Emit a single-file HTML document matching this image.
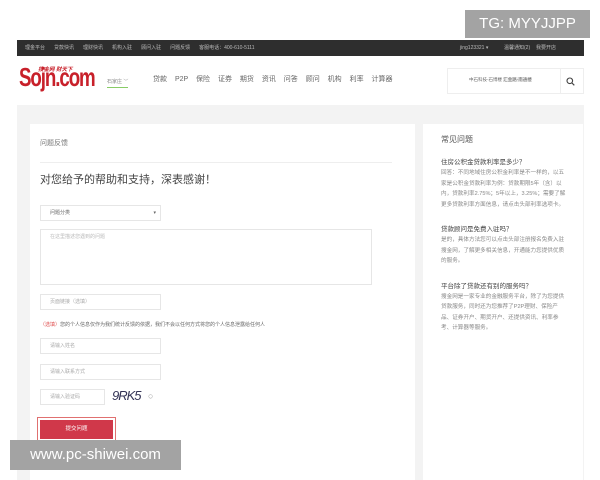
<!DOCTYPE html>
<html><head><meta charset="utf-8"><style>
*{margin:0;padding:0;box-sizing:border-box}
body{width:600px;height:480px;background:#fff;position:relative;overflow:hidden;font-family:"Liberation Sans","Noto Sans CJK SC",sans-serif;color:#555}
.a{position:absolute}
.top{left:17px;top:40px;width:567px;height:16px;background:#2e2e2e;font-size:5px;color:#bbb;line-height:16px}
.top span{margin-left:9px}
.hdr{left:17px;top:56px;width:567px;height:49px;background:#fff}
.gray{left:17px;top:105px;width:567px;height:375px;background:#f3f3f3}
.card{background:#fff}
.inp{position:absolute;border:1px solid #e6e6e6;background:#fff;font-size:5px;color:#aaa;padding-left:9px;line-height:14px}
.side p{font-size:5.6px;line-height:10.5px;color:#888}
.side h4{font-size:6.5px;font-weight:normal;color:#444;margin:12px 0 2px}
</style></head><body>
<div class="a top"><span style="margin-left:8px">理金平台</span><span>贷款快讯</span><span>理财快讯</span><span>机构入驻</span><span>顾问入驻</span><span>问题反馈</span><span>客服电话：400-610-5111</span>
<span style="position:absolute;left:434px">jing123321 ▾</span><span style="position:absolute;left:478px">温馨通知(2)</span><span style="position:absolute;left:510px">我要开店</span></div>
<div class="a hdr">
<div class="a" style="left:2px;top:8px;font-size:26px;line-height:1;font-weight:bold;color:#c8202a;letter-spacing:-1.5px;transform:scaleX(0.72);transform-origin:0 0;white-space:nowrap">Sojn.com</div>
<div class="a" style="left:21px;top:9px;font-size:5.5px;color:#c8202a;font-style:italic;font-weight:bold">搜金网 财天下</div>
<div class="a" style="left:90px;top:22px;font-size:5px;color:#888;border-bottom:1px solid #8c6;padding-bottom:2px">石家庄 ﹀</div>
<div class="a" style="left:136px;top:18px;font-size:7px;color:#666;word-spacing:6px">贷款 P2P 保险 证券 期货 资讯 问答 顾问 机构 利率 计算器</div>
<div class="a" style="left:430px;top:12px;width:137px;height:26px;border:1px solid #eee"></div>
<div class="a" style="left:452px;top:21px;font-size:4.5px;color:#666">中石科技-石博楼 <span style="background:#eee">汇金路-南通楼</span></div>
<div class="a" style="left:543px;top:12px;width:1px;height:26px;background:#eee"></div>
<svg class="a" style="left:549px;top:21px" width="9" height="9" viewBox="0 0 9 9"><circle cx="3.8" cy="3.8" r="2.8" fill="none" stroke="#444" stroke-width="1.1"/><path d="M6 6L8.3 8.3" stroke="#444" stroke-width="1.2"/></svg>
</div>
<div class="a gray"></div>
<div class="a card" style="left:30px;top:124px;width:385px;height:356px">
<div class="a" style="left:10px;top:14px;font-size:7px;color:#777">问题反馈</div>
<div class="a" style="left:10px;top:38px;width:352px;height:1px;background:#eee"></div>
<div class="a" style="left:10px;top:47px;font-size:11px;color:#444">对您给予的帮助和支持，深表感谢！</div>
<div class="inp" style="left:10px;top:81px;width:121px;height:16px;line-height:14px;color:#666">问题分类<span style="position:absolute;right:4px">▾</span></div>
<div class="inp" style="left:10px;top:105px;width:332px;height:56px;color:#bbb">在这里描述您遇到的问题</div>
<div class="inp" style="left:10px;top:170px;width:121px;height:16px">页面链接（选填）</div>
<div class="a" style="left:10px;top:197px;font-size:5px;color:#666"><span style="color:#e05050">（选填）</span>您的个人信息仅作为我们统计反馈的依据，我们不会以任何方式将您的个人信息泄露给任何人</div>
<div class="inp" style="left:10px;top:214px;width:121px;height:16px">请输入姓名</div>
<div class="inp" style="left:10px;top:240px;width:121px;height:16px">请输入联系方式</div>
<div class="inp" style="left:10px;top:265px;width:65px;height:16px">请输入验证码</div>
<div class="a" style="left:82px;top:264px;font-size:13px;color:#335;font-style:italic;letter-spacing:-1px">9RK5</div>
<div class="a" style="left:118px;top:267px;font-size:9px;color:#999">○</div>
<div class="a" style="left:7px;top:293px;width:79px;height:25px;border:1px solid #e07070;background:#fff"></div>
<div class="a" style="left:10px;top:296px;width:73px;height:19px;background:#d0384a;color:#fff;font-size:5.5px;text-align:center;line-height:19px">提交问题</div>
</div>
<div class="a card side" style="left:423px;top:124px;width:160px;height:356px;padding:0 14px 0 18px">
<div style="margin-top:10px;font-size:8px;color:#555">常见问题</div>
<h4 style="margin-top:11px">住房公积金贷款利率是多少？</h4>
<p>回答：不同地域住房公积金利率是不一样的，以五家是公积金贷款利率为例：贷款期限5年（含）以内，贷款利率2.75%；5年以上，3.25%；需要了解更多贷款利率方面信息，请点击头部利率选项卡。</p>
<h4 style="margin-top:13px">贷款顾问是免费入驻吗？</h4>
<p>是的，具体方法您可以点击头部注册报名免费入驻搜金网，了解更多相关信息，开通能力您提供优质的服务。</p>
<h4 style="margin-top:13px">平台除了贷款还有别的服务吗？</h4>
<p>搜金网是一家专业的金融服务平台，除了为您提供贷款服务，同时还为您推荐了P2P理财、保险产品、证券开户、期货开户、还提供资讯、利率参考、计算器等服务。</p>
</div>
<div class="a" style="left:465px;top:10px;width:125px;height:28px;background:#a3a3a3;color:#fff;font-size:15px;line-height:28px;text-align:center">TG: MYYJJPP</div>
<div class="a" style="left:10px;top:440px;width:171px;height:30px;background:#a3a3a3;color:#fff;font-size:15px;line-height:30px;text-align:center">www.pc-shiwei.com</div>
</body></html>
